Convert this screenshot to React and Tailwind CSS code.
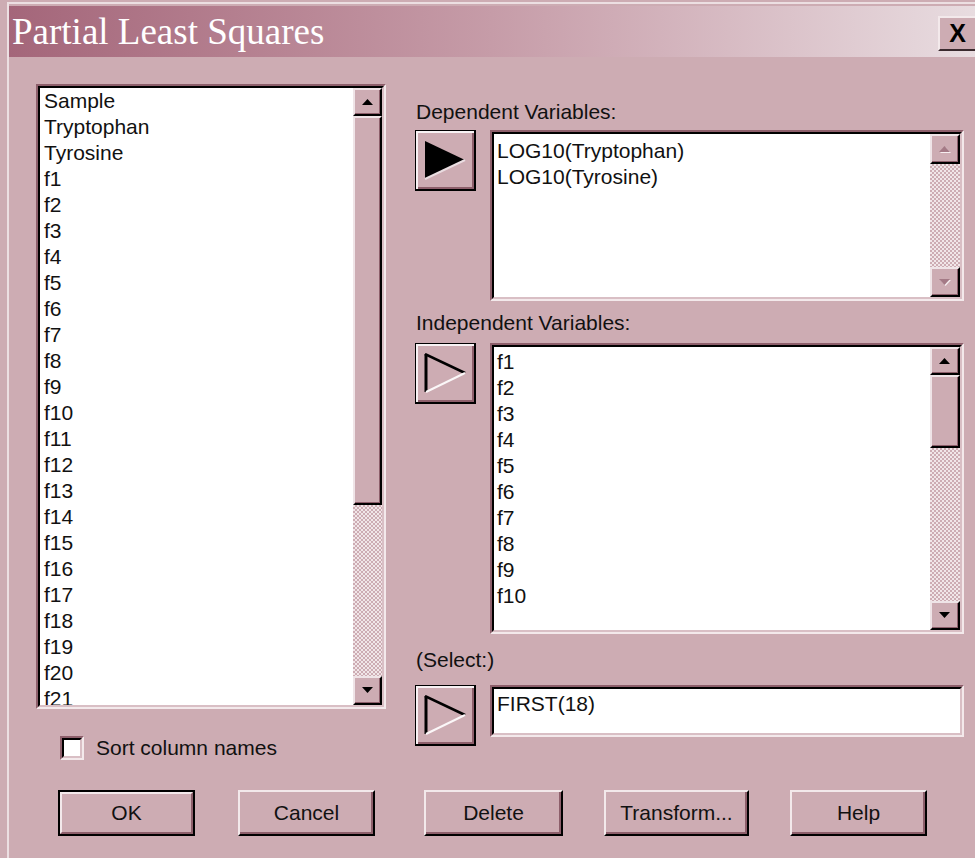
import React from 'react';

const leftItems = [
  'Sample',
  'Tryptophan',
  'Tyrosine',
  ...Array.from({ length: 21 }, (_, i) => `f${i + 1}`),
];
const depItems = ['LOG10(Tryptophan)', 'LOG10(Tyrosine)'];
const indItems = Array.from({ length: 10 }, (_, i) => `f${i + 1}`);

// Sunken 3D frame used by list boxes and the text field
function Sunken({ className, children }) {
  return (
    <div
      className={`border-2 border-t-[#8d5f6b] border-l-[#8d5f6b] border-b-[#f3e9eb] border-r-[#f3e9eb] ${className}`}
    >
      <div className="h-full flex overflow-hidden bg-white border-2 border-t-black border-l-black border-b-[#d9bfc5] border-r-[#d9bfc5]">
        {children}
      </div>
    </div>
  );
}

// Raised piece for scroll buttons and thumbs
function Raised({ className, children }) {
  return (
    <div
      className={`shrink-0 flex items-center justify-center bg-[#cdacb3] border-2 border-t-[#efe4e7] border-l-[#efe4e7] border-b-black border-r-black shadow-[inset_-1px_-1px_0_#8d5f6b] ${className}`}
    >
      {children}
    </div>
  );
}

function Arrow({ up, disabled }) {
  const pts = up ? '5.5,0 11,6 0,6' : '0,0 11,0 5.5,6';
  return (
    <svg width="12" height="7" viewBox="0 0 12 7">
      {disabled && <polygon points={pts} fill="#f6eef0" transform="translate(1,1)" />}
      <polygon points={pts} fill={disabled ? '#a47a86' : '#000'} />
    </svg>
  );
}

function Track({ className }) {
  return (
    <div
      className={`bg-[image:repeating-conic-gradient(#cdacb3_0%_25%,#f1e6e8_0%_50%)] bg-[length:4px_4px] ${className}`}
    />
  );
}

function MoveButton({ filled }) {
  return (
    <div className="w-[61px] h-[61px] shrink-0 flex items-center justify-center bg-[#cdacb3] border-t border-l border-b-2 border-r-2 border-black shadow-[inset_2px_2px_0_#f8f2f4,inset_-2px_-2px_0_#8d5f6b]">
      <svg width="42" height="40" viewBox="0 0 42 40">
        {filled ? (
          <>
            <polygon points="1,1 41,20 1,39" fill="#000" />
            <line x1="1" y1="39" x2="41" y2="20" stroke="#eadde1" strokeWidth="2" />
          </>
        ) : (
          <>
            <line x1="2" y1="1" x2="2" y2="39" stroke="#000" strokeWidth="3" />
            <line x1="1" y1="1" x2="41" y2="20" stroke="#000" strokeWidth="2.5" />
            <line x1="2" y1="39" x2="41" y2="20" stroke="#fbf7f8" strokeWidth="2" />
          </>
        )}
      </svg>
    </div>
  );
}

function Label({ className, children }) {
  return <div className={`h-[26px] leading-[26px] pl-[1px] ${className}`}>{children}</div>;
}

export default function App() {
  return (
    <div className="w-[975px] h-[858px] overflow-hidden bg-[#cdacb3] text-[21px] text-[#111] font-['Liberation_Sans',Arial,sans-serif]">
      <div className="ml-[7px] mt-[2px] h-[856px] border-l-2 border-t-2 border-[#ecdfe2]">
        {/* caption bar */}
        <div className="mt-[2px] h-[51px] flex items-center pl-[3px] bg-linear-to-r from-[#a4667a] via-[#c69ca8] to-[#e8dce0]">
          <span className="font-['Liberation_Serif',serif] text-[37px] leading-none text-white">
            Partial Least Squares
          </span>
          <div className="ml-auto mt-[4px] w-[37px] h-[35px] flex items-center justify-center bg-[#cdacb3] border-t-2 border-l-2 border-[#f3e9eb] border-b-2 border-b-[#3a2a2e] font-bold text-[25px] leading-none text-black">
            X
          </div>
        </div>

        {/* dialog body */}
        <div className="flex pl-[27px] pt-[27px]">
          {/* column list */}
          <div className="w-[350px] flex flex-col">
            <Sunken className="h-[625px]">
              <div className="flex-1 pl-[4px] leading-[26px] overflow-hidden">
                {leftItems.map((t) => (
                  <div key={t} className="h-[26px] whitespace-nowrap">
                    {t}
                  </div>
                ))}
              </div>
              <div className="w-[29px] flex flex-col">
                <Raised className="h-[28px]">
                  <Arrow up />
                </Raised>
                <Raised className="h-[389px]" />
                <Track className="flex-1" />
                <Raised className="h-[29px]">
                  <Arrow />
                </Raised>
              </div>
            </Sunken>
            <div className="mt-[27px] pl-[24px] flex items-center">
              <div className="w-[24px] h-[24px] border-2 border-t-[#8d5f6b] border-l-[#8d5f6b] border-b-[#f3e9eb] border-r-[#f3e9eb]">
                <div className="h-full bg-white border-2 border-t-black border-l-black border-b-[#d9bfc5] border-r-[#d9bfc5]" />
              </div>
              <span className="ml-[12px] leading-[24px]">Sort column names</span>
            </div>
          </div>

          {/* variable fields */}
          <div className="ml-[29px] w-[549px] flex flex-col">
            <Label className="mt-[15px]">Dependent Variables:</Label>
            <div className="mt-[5px] flex">
              <MoveButton filled />
              <Sunken className="ml-[14px] w-[474px] h-[171px]">
                <div className="flex-1 pl-[3px] pt-[4px] leading-[26px]">
                  {depItems.map((t) => (
                    <div key={t} className="h-[26px]">
                      {t}
                    </div>
                  ))}
                </div>
                <div className="w-[30px] flex flex-col">
                  <Raised className="h-[30px]">
                    <Arrow up disabled />
                  </Raised>
                  <Track className="flex-1" />
                  <Raised className="h-[30px]">
                    <Arrow disabled />
                  </Raised>
                </div>
              </Sunken>
            </div>

            <Label className="mt-[9px]">Independent Variables:</Label>
            <div className="mt-[7px] flex">
              <MoveButton />
              <Sunken className="ml-[14px] w-[474px] h-[291px]">
                <div className="flex-1 pl-[3px] pt-[2px] leading-[26px]">
                  {indItems.map((t) => (
                    <div key={t} className="h-[26px]">
                      {t}
                    </div>
                  ))}
                </div>
                <div className="w-[30px] flex flex-col">
                  <Raised className="h-[28px]">
                    <Arrow up />
                  </Raised>
                  <Raised className="h-[73px]" />
                  <Track className="flex-1" />
                  <Raised className="h-[29px]">
                    <Arrow />
                  </Raised>
                </div>
              </Sunken>
            </div>

            <Label className="mt-[13px]">(Select:)</Label>
            <div className="mt-[12px] flex">
              <MoveButton />
              <Sunken className="ml-[14px] w-[474px] h-[52px]">
                <div className="flex-1 pl-[3px] pt-[2px] leading-[26px]">FIRST(18)</div>
              </Sunken>
            </div>
          </div>
        </div>

        {/* command buttons */}
        <div className="mt-[30px] pl-[49px] flex h-[46px]">
          <div className="w-[137px] h-[46px] border-2 border-black">
            <div className="h-full flex items-center justify-center bg-[#cdacb3] border-2 border-t-[#f3e9eb] border-l-[#f3e9eb] border-b-[#8d5f6b] border-r-[#8d5f6b]">
              OK
            </div>
          </div>
          <div className="ml-[43px] w-[137px] h-[46px] flex items-center justify-center bg-[#cdacb3] border-2 border-t-[#f3e9eb] border-l-[#f3e9eb] border-b-black border-r-black shadow-[inset_-2px_-2px_0_#8d5f6b]">
            Cancel
          </div>
          <div className="ml-[49px] w-[139px] h-[46px] flex items-center justify-center bg-[#cdacb3] border-2 border-t-[#f3e9eb] border-l-[#f3e9eb] border-b-black border-r-black shadow-[inset_-2px_-2px_0_#8d5f6b]">
            Delete
          </div>
          <div className="ml-[41px] w-[145px] h-[46px] flex items-center justify-center bg-[#cdacb3] border-2 border-t-[#f3e9eb] border-l-[#f3e9eb] border-b-black border-r-black shadow-[inset_-2px_-2px_0_#8d5f6b]">
            Transform...
          </div>
          <div className="ml-[41px] w-[137px] h-[46px] flex items-center justify-center bg-[#cdacb3] border-2 border-t-[#f3e9eb] border-l-[#f3e9eb] border-b-black border-r-black shadow-[inset_-2px_-2px_0_#8d5f6b]">
            Help
          </div>
        </div>
      </div>
    </div>
  );
}
